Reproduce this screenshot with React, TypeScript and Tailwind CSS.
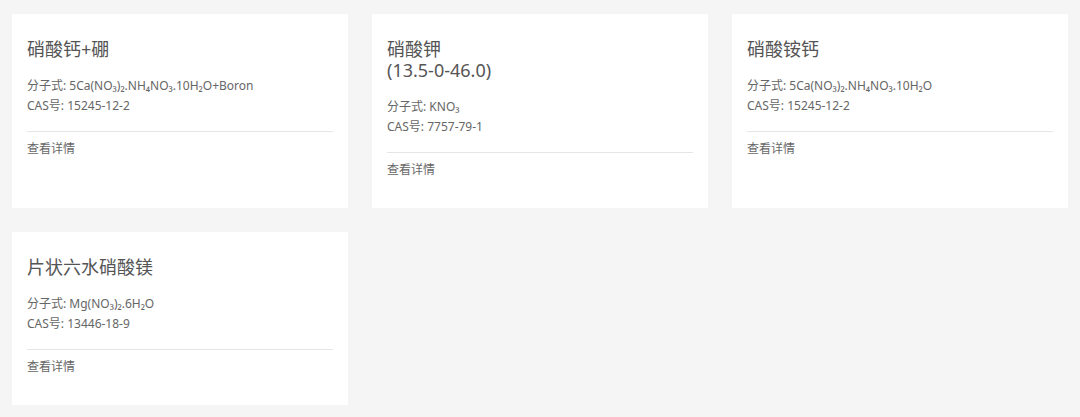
import React from 'react';

const products = [
  { name: ['硝酸钙+硼'], formula: '5Ca(NO₃)₂.NH₄NO₃.10H₂O+Boron', cas: '15245-12-2' },
  { name: ['硝酸钾', '(13.5-0-46.0)'], formula: 'KNO₃', cas: '7757-79-1' },
  { name: ['硝酸铵钙'], formula: '5Ca(NO₃)₂.NH₄NO₃.10H₂O', cas: '15245-12-2' },
  { name: ['片状六水硝酸镁'], formula: 'Mg(NO₃)₂.6H₂O', cas: '13446-18-9' },
];

export default function App() {
  return (
    <div
      className="min-h-[417px] w-[1080px] bg-[#f5f5f5] px-3 pt-[14px] pb-3"
      style={{ fontFamily: '"Noto Sans", "Noto Sans CJK SC", sans-serif' }}
    >
      <div className="grid grid-cols-3 gap-6">
        {products.map((p, i) => (
          <div key={i} className="bg-white px-[15px] pt-[25px] pb-[28px]">
            <h3 className="text-[18px] leading-[21px] text-[#555]">
              {p.name.map((line, j) => (
                <div key={j}>{line}</div>
              ))}
            </h3>
            <div className="mt-[16px] text-[12px] leading-[20px] text-[#666]">
              <div>分子式: {p.formula}</div>
              <div>CAS号: {p.cas}</div>
            </div>
            <div className="mt-[15px] border-t border-[#e6e6e6] pt-[7px] text-[12px] leading-[20px] text-[#666]">
              查看详情
            </div>
          </div>
        ))}
      </div>
    </div>
  );
}
